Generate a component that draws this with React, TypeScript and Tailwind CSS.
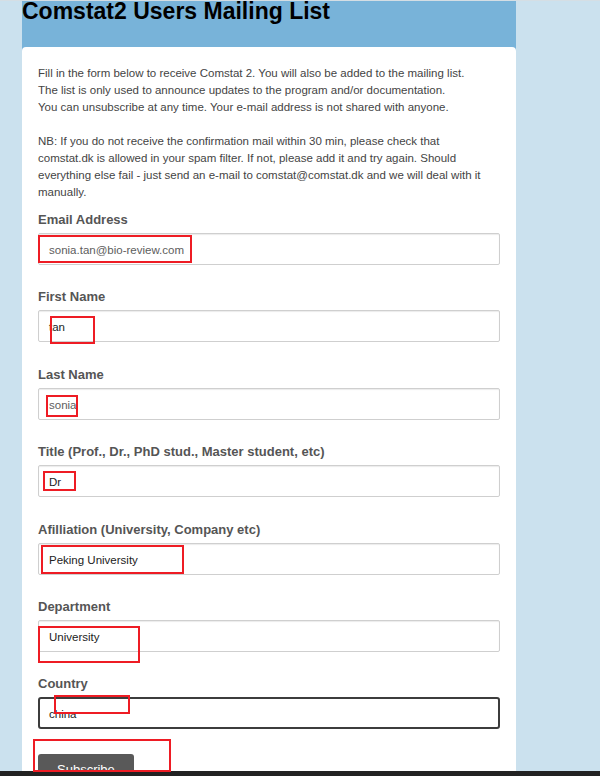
import React from "react";

const fields = [
  { label: "Email Address", value: "sonia.tan@bio-review.com", muted: true },
  { label: "First Name", value: "tan" },
  { label: "Last Name", value: "sonia", muted: true },
  { label: "Title (Prof., Dr., PhD stud., Master student, etc)", value: "Dr" },
  { label: "Afilliation (University, Company etc)", value: "Peking University" },
  { label: "Department", value: "University" },
  { label: "Country", value: "china", focused: true },
];

// red annotation boxes drawn over the screenshot
const marks = [
  { left: 38, top: 234, width: 154, height: 28 },
  { left: 50, top: 315, width: 45, height: 28 },
  { left: 46, top: 394, width: 32, height: 22 },
  { left: 43, top: 470, width: 33, height: 20 },
  { left: 41, top: 544, width: 143, height: 29 },
  { left: 38, top: 625, width: 102, height: 37 },
  { left: 54, top: 694, width: 76, height: 19 },
  { left: 33, top: 738, width: 138, height: 33 },
];

export default function App() {
  return (
    <div className="relative h-[776px] w-[600px] overflow-hidden flex flex-col bg-[#cbe1ee] border-t border-[#d5dee4] font-['Liberation_Sans',Arial,sans-serif]">
      <div className="flex-1 overflow-hidden pl-[22px]">
        <div className="w-[494px] bg-[#78b3d9]">
          <div className="h-[47px]">
            <h1 className="mt-[-1px] text-[23px] leading-[23px] font-bold text-black whitespace-nowrap">
              Comstat2 Users Mailing List
            </h1>
          </div>
          <div className="bg-white rounded-t-[4px] px-4 pt-[18px] pb-10">
            <p className="text-[11.5px] leading-[17px] text-[#444] whitespace-nowrap">
              Fill in the form below to receive Comstat 2. You will also be added to the mailing list.
              <br />
              The list is only used to announce updates to the program and/or documentation.
              <br />
              You can unsubscribe at any time. Your e-mail address is not shared with anyone.
              <br />
              <br />
              NB: If you do not receive the confirmation mail within 30 min, please check that
              <br />
              comstat.dk is allowed in your spam filter. If not, please add it and try again. Should
              <br />
              everything else fail - just send an e-mail to comstat@comstat.dk and we will deal with it
              <br />
              manually.
            </p>
            <form className="mt-[10px] flex flex-col gap-[23.4px]">
              {fields.map((f) => (
                <div key={f.label}>
                  <label className="block text-[13px] leading-[17px] font-bold text-[#555] mb-[5px] whitespace-nowrap">
                    {f.label}
                  </label>
                  <div
                    className={
                      f.focused
                        ? "h-[32px] flex items-center px-[9px] rounded-[3px] border-2 border-[#3c3c3c] bg-white"
                        : "h-[32px] flex items-center px-[10px] rounded-[2px] border border-[#cfcfcf] bg-white shadow-[inset_0_1px_1px_rgba(0,0,0,0.08)]"
                    }
                  >
                    <span
                      className={
                        f.muted
                          ? "text-[11.5px] leading-[14px] pt-[2px] text-[#5d5d5d]"
                          : "text-[11.5px] leading-[14px] pt-[2px] text-[#222]"
                      }
                    >
                      {f.value}
                    </span>
                  </div>
                </div>
              ))}
              <div className="mt-[1px]">
                <button
                  type="button"
                  className="h-[32px] px-[19px] rounded-[3px] bg-[#595959] text-white text-[13px] leading-[15px]"
                >
                  Subscribe
                </button>
              </div>
            </form>
          </div>
        </div>
      </div>
      <div className="h-[5px] bg-[#222]" />
      {marks.map((m, i) => (
        <div
          key={i}
          className="absolute border-2 border-[#ee1c24] pointer-events-none"
          style={{ left: m.left, top: m.top, width: m.width, height: m.height }}
        />
      ))}
    </div>
  );
}
